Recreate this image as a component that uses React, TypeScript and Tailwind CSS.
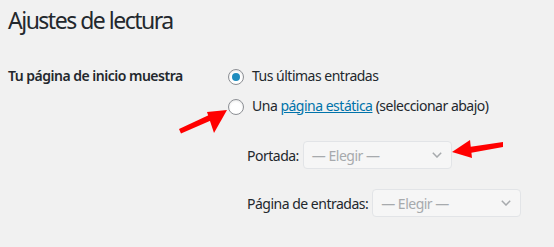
import React from "react";

function Radio({ checked }: { checked?: boolean }) {
  return (
    <span className="mt-[4px] flex h-4 w-4 shrink-0 items-center justify-center rounded-full border border-[#8c8f94] bg-white shadow-[inset_0_1px_2px_rgba(0,0,0,0.1)]">
      {checked && <span className="h-2 w-2 rounded-full bg-[#1e8cbe]" />}
    </span>
  );
}

function DisabledSelect() {
  return (
    <div className="flex h-[28px] w-[149px] items-center justify-between rounded-[4px] border border-[#e2e4e7] bg-[#f6f6f6] pl-[8px] pr-[9px] text-[#a7aaad]">
      <span>— Elegir —</span>
      <svg width="10" height="6" viewBox="0 0 10 6" fill="none">
        <path d="M0.8 0.8 L5 5 L9.2 0.8" stroke="#a7aaad" strokeWidth="1.5" />
      </svg>
    </div>
  );
}

export default function App() {
  return (
    <div
      className="relative h-[247px] w-[554px] overflow-hidden bg-[#f1f1f1] pl-[8px] text-[14px] tracking-[-0.5px] text-[#23282d]"
      style={{ fontFamily: '"Noto Sans", "Open Sans", sans-serif' }}
    >
      {/* Title */}
      <h1 className="pt-[5px] text-[23px] font-normal leading-[30px] tracking-[-1.5px]">Ajustes de lectura</h1>

      {/* Front page settings */}
      <div className="mt-[25px] flex items-start">
        <div className="flex h-[30px] w-[220px] items-center font-semibold">Tu página de inicio muestra</div>
        <div className="flex flex-col">
          <label className="flex h-[30px] items-center gap-[8px]">
            <Radio checked />
            <span>Tus últimas entradas</span>
          </label>
          <label className="flex h-[30px] items-center gap-[8px]">
            <Radio />
            <span>
              Una{" "}
              <a className="text-[#0073aa] underline">página estática</a>{" "}
              (seleccionar abajo)
            </span>
          </label>

          <div className="ml-[19px] mt-[21px] flex flex-col gap-[20px]">
            <div className="flex items-center gap-[4px]">
              <span>Portada:</span>
              <DisabledSelect />
            </div>
            <div className="flex items-center gap-[4px]">
              <span>Página de entradas:</span>
              <DisabledSelect />
            </div>
          </div>
        </div>
      </div>

      {/* Annotation arrows */}
      <svg className="pointer-events-none absolute inset-0" width="554" height="247">
        <polygon points="179,129 181,133.5 212,120 209,115" fill="#f00" />
        <polygon points="227,110 207,112 214,133" fill="#f00" />
        <polygon points="503,142 503,147 470,153 469,147" fill="#f00" />
        <polygon points="452,152 470,140 472,158" fill="#f00" />
      </svg>
    </div>
  );
}
